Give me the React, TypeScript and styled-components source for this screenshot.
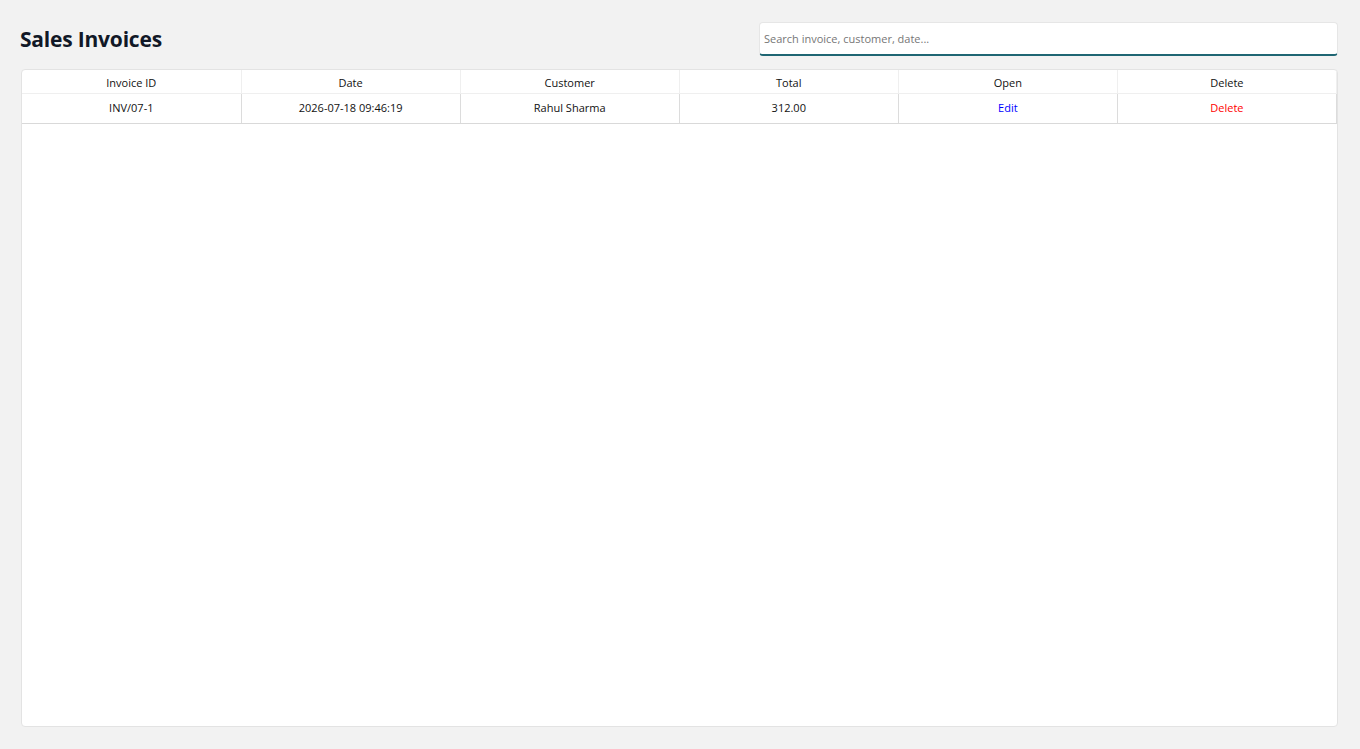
import React from 'react';
import styled, {createGlobalStyle} from 'styled-components';

type InvoiceType = {
    id: string
    date: string
    customer: string
    total: string
}

const invoices: InvoiceType[] = [
    {id: 'INV/07-1', date: '2026-07-18 09:46:19', customer: 'Rahul Sharma', total: '312.00'},
]

const columns = ['Invoice ID', 'Date', 'Customer', 'Total', 'Open', 'Delete']

const GlobalStyle = createGlobalStyle`
  html, body {
    margin: 0;
    padding: 0;
    background: #f2f2f2;
    font-family: "Open Sans", "Noto Sans", sans-serif;
  }
  * {
    box-sizing: border-box;
  }
`

export default function App() {
    return (
        <Page>
            <GlobalStyle/>
            <Header>
                <Title>Sales Invoices</Title>
                <Search placeholder="Search invoice, customer, date..."/>
            </Header>
            <Card>
                <Table>
                    <thead>
                    <tr>
                        {columns.map(c => <HeadCell key={c}>{c}</HeadCell>)}
                    </tr>
                    </thead>
                    <tbody>
                    {invoices.map(inv => (
                        <tr key={inv.id}>
                            <Cell>{inv.id}</Cell>
                            <Cell>{inv.date}</Cell>
                            <Cell>{inv.customer}</Cell>
                            <Cell>{inv.total}</Cell>
                            <Cell><Action color="#0000ff">Edit</Action></Cell>
                            <Cell><Action color="#ff0000">Delete</Action></Cell>
                        </tr>
                    ))}
                    </tbody>
                </Table>
            </Card>
        </Page>
    );
}

const Page = styled.div`
  height: 100vh;
  display: flex;
  flex-direction: column;
  padding: 21px 22px 22px 20px;
`

const Header = styled.div`
  display: flex;
  align-items: center;
  justify-content: space-between;
  height: 35px;
  margin-bottom: 13px;
`

const Title = styled.h1`
  margin: 0;
  font-size: 21px;
  font-weight: 700;
  color: #111827;
  letter-spacing: -0.2px;
`

const Search = styled.input`
  width: 579px;
  height: 34px;
  padding: 0 4px;
  border: 1px solid #e6e6e6;
  border-bottom: 2px solid #1f6673;
  border-radius: 4px;
  background: #ffffff;
  font-family: inherit;
  font-size: 11px;
  color: #222;
  outline: none;

  &::placeholder {
    color: #767676;
  }
`

const Card = styled.div`
  flex: 1;
  margin-left: 1px;
  background: #ffffff;
  border: 1px solid #e3e3e3;
  border-radius: 4px;
  overflow: hidden;
`

const Table = styled.table`
  width: 100%;
  border-collapse: collapse;
  table-layout: fixed;
  font-size: 11px;
  color: #111;
`

const HeadCell = styled.th`
  height: 23px;
  padding: 2px 0 0;
  font-weight: 400;
  text-align: center;
  border-right: 1px solid #efefef;
  border-bottom: 1px solid #efefef;
`

const Cell = styled.td`
  height: 30px;
  padding: 0 0 1px;
  text-align: center;
  border-right: 1px solid #dcdcdc;
  border-bottom: 1px solid #d9d9d9;
`

const Action = styled.span<{ color: string }>`
  color: ${props => props.color};
  cursor: pointer;
`
